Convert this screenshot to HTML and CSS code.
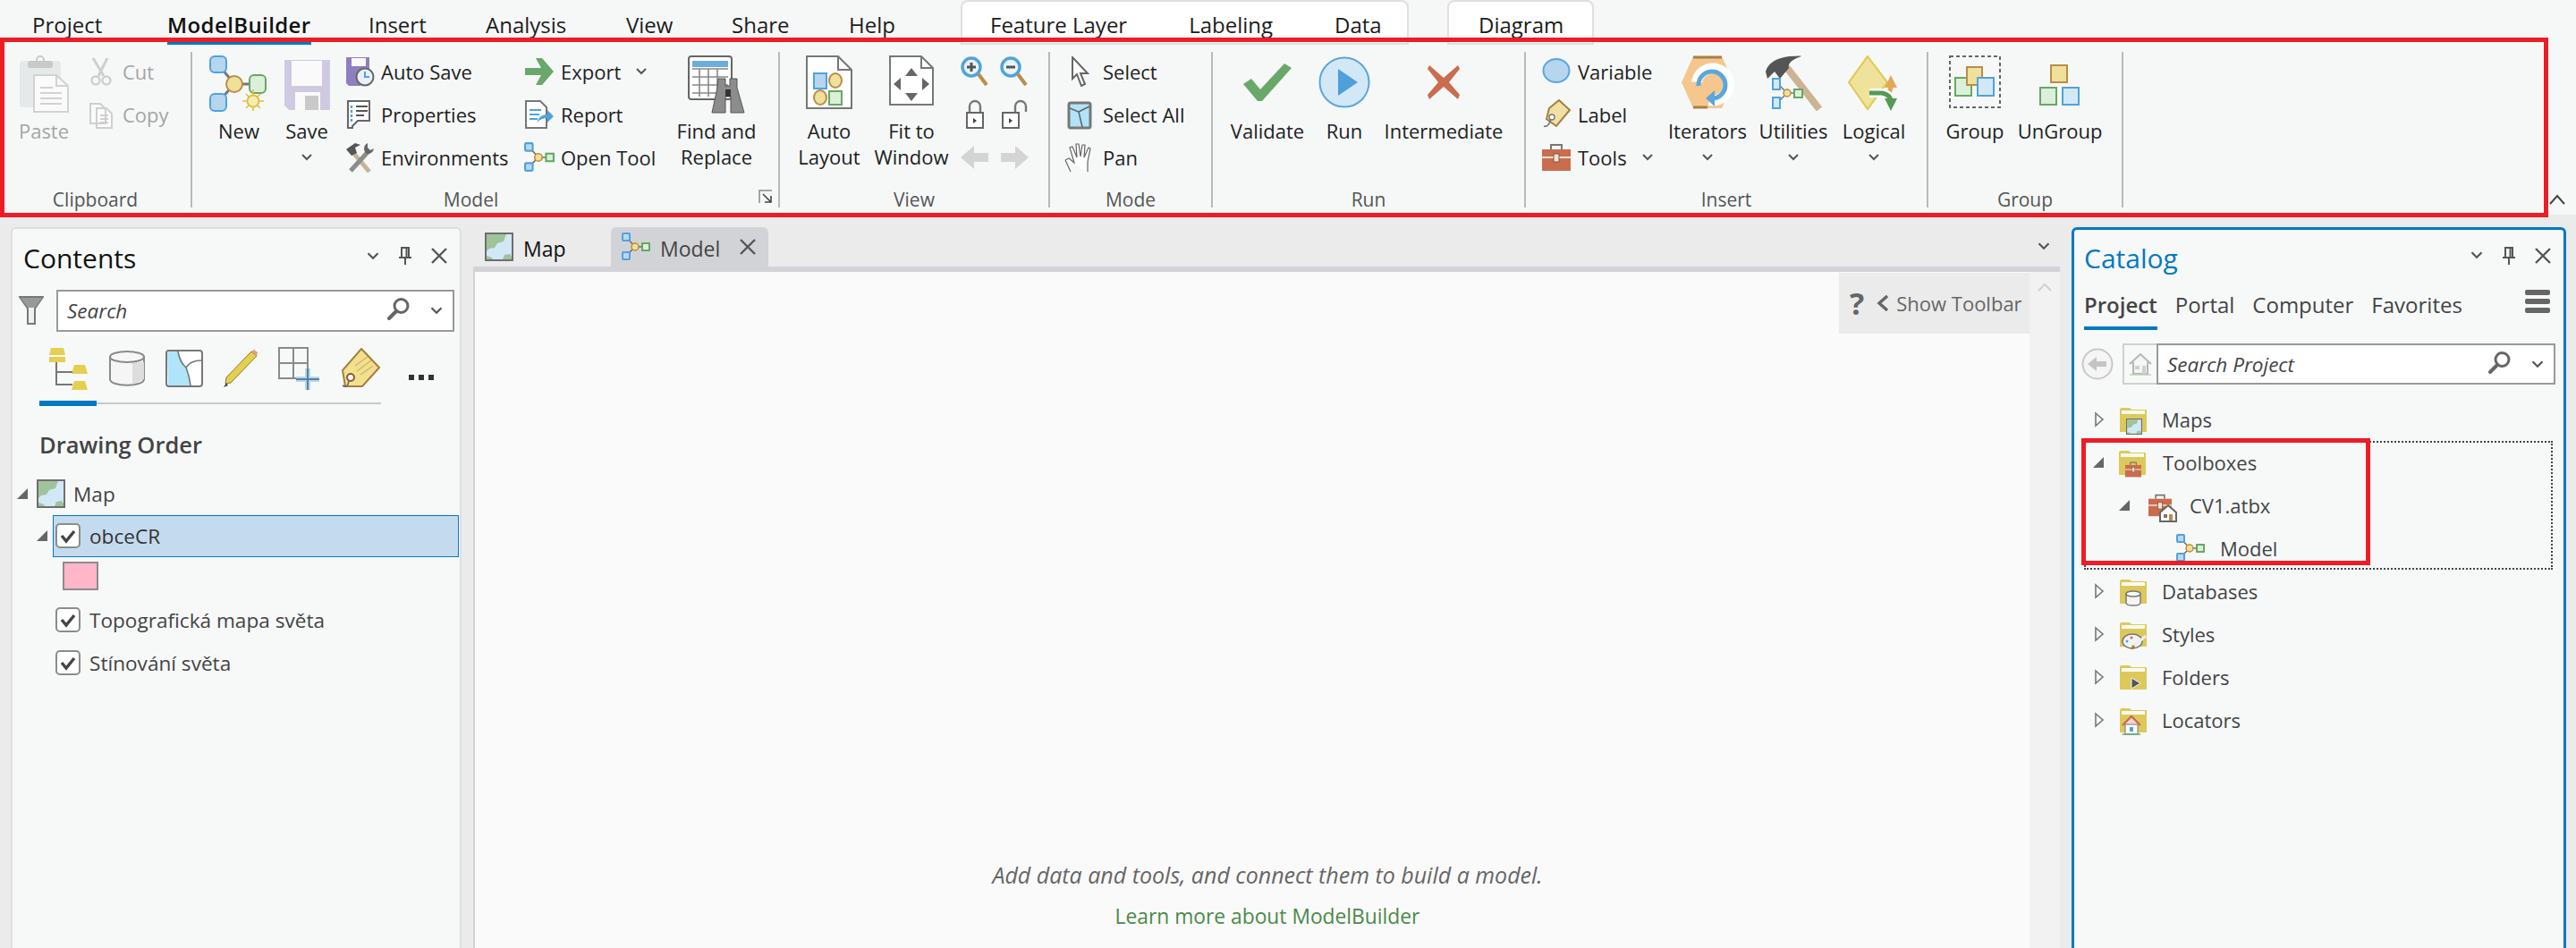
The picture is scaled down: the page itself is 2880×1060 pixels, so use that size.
FILE: index.html
```html
<!DOCTYPE html>
<html lang="en">
<head>
<meta charset="utf-8">
<title>ModelBuilder</title>
<link rel="stylesheet" href="styles.css">
</head>
<body>
<svg class="defs" aria-hidden="true">
  <symbol id="i-model" viewBox="0 0 32 32">
    <path d="M6 6 15 16 6 25M15 16H25" fill="none" stroke="#7a6a50" stroke-width="1.5"/>
    <rect x="1" y="1" width="8" height="8" rx="1" fill="#b8d8f0" stroke="#4fa3dc" stroke-width="2"/>
    <rect x="1" y="22" width="8" height="8" rx="1" fill="#b8d8f0" stroke="#4fa3dc" stroke-width="2"/>
    <circle cx="15" cy="16" r="4" fill="#f0e090" stroke="#b98d4a" stroke-width="1.5"/>
    <rect x="23" y="12" width="8" height="8" fill="#dcefd8" stroke="#66a866" stroke-width="2"/>
  </symbol>
  <symbol id="i-map" viewBox="0 0 32 32">
    <rect x="1" y="1" width="30" height="30" fill="#d3e8f6" stroke="#6e6e6e" stroke-width="2"/>
    <path d="M2 2H24L21 10 14 12 11 17 5 18 2 21ZM20 30 22 25 28 24 30 27V30Z M2 26 8 28 9 30H2Z" fill="#a0c49a"/>
  </symbol>
  <symbol id="i-chev" viewBox="0 0 14 10">
    <path d="M2 2 7 7 12 2" fill="none" stroke="#555" stroke-width="2"/>
  </symbol>
  <symbol id="i-x" viewBox="0 0 20 20">
    <path d="M2 2 18 18M18 2 2 18" stroke="#555" stroke-width="2.4" fill="none"/>
  </symbol>
  <symbol id="i-pin" viewBox="0 0 16 22">
    <path d="M4 2H12V13H4ZM1 13H15M8 13V21M9.5 3V12" fill="none" stroke="#555" stroke-width="2"/>
  </symbol>
  <symbol id="i-find" viewBox="0 0 26 26">
    <circle cx="15.5" cy="10" r="7.5" fill="none" stroke="#666" stroke-width="3"/>
    <path d="M10 16 2 24" stroke="#666" stroke-width="4" stroke-linecap="round"/>
  </symbol>
  <symbol id="i-open" viewBox="0 0 12 18">
    <path d="M2 2 10 9 2 16Z" fill="#f7f9f9" stroke="#777" stroke-width="1.6"/>
  </symbol>
  <symbol id="i-shut" viewBox="0 0 14 14">
    <path d="M13 1V13H1Z" fill="#666"/>
  </symbol>
  <symbol id="i-check" viewBox="0 0 28 28">
    <rect x="1" y="1" width="26" height="26" rx="4" fill="#fff" stroke="#8c8c8c" stroke-width="2"/>
    <path d="M7 14 12 20 21 9" fill="none" stroke="#444" stroke-width="3.4"/>
  </symbol>
  <symbol id="i-folder" viewBox="0 0 30 28">
    <path d="M0 3Q0 1 2 1H11L13 3H30V28H0Z" fill="#dcc95a"/>
    <path d="M2 4H28V8H2Z" fill="#fbfaf0"/>
  </symbol>
  <symbol id="i-toolbox" viewBox="0 0 34 32">
    <path d="M11 7V2H23V7" fill="none" stroke="#777" stroke-width="2"/>
    <rect x="1" y="7" width="32" height="24" fill="#c96d4e"/>
    <path d="M1 16H33" stroke="#f3e3da" stroke-width="2"/>
    <rect x="14" y="12" width="6" height="9" fill="#f3e3da" stroke="#8a5040"/>
  </symbol>
</svg>

<header class="top">
  <nav class="menu">
    <a class="m">Project</a>
    <a class="m m-builder">ModelBuilder</a>
    <a class="m">Insert</a>
    <a class="m">Analysis</a>
    <a class="m">View</a>
    <a class="m">Share</a>
    <a class="m">Help</a>
    <div class="ctx ctx-layer">
      <a class="m">Feature Layer</a>
      <a class="m">Labeling</a>
      <a class="m">Data</a>
    </div>
    <div class="ctx ctx-diagram"><a class="m">Diagram</a></div>
  </nav>

  <div class="ribbon">
    <section class="group g-clip">
      <div class="tools">
        <div class="lg off">
          <span class="lg-icon">
            <svg width="56" height="64" viewBox="0 0 56 64">
              <rect x="1" y="6" width="46" height="52" rx="4" fill="#e6e9e9"/>
              <rect x="10" y="6" width="28" height="8" rx="3" fill="#c9c9c9"/>
              <circle cx="24" cy="5" r="4" fill="none" stroke="#c9c9c9" stroke-width="2"/>
              <path d="M17 22H42L55 34V63H17Z" fill="#fafafa" stroke="#d2d2d2" stroke-width="2"/>
              <path d="M42 22V34H55M24 36H38M24 42H48M24 48H48M24 54H48" fill="none" stroke="#d2d2d2" stroke-width="2"/>
            </svg>
          </span>
          <span>Paste</span>
        </div>
        <div class="col">
          <div class="sm off">
            <svg width="34" height="34" viewBox="0 0 34 34">
              <path d="M8 2 20 22M24 2 14 22" stroke="#cfcfcf" stroke-width="3" fill="none"/>
              <circle cx="11" cy="27" r="4.5" fill="none" stroke="#cfcfcf" stroke-width="2.5"/>
              <circle cx="23" cy="27" r="4.5" fill="none" stroke="#cfcfcf" stroke-width="2.5"/>
            </svg>
            <span>Cut</span>
          </div>
          <div class="sm off">
            <svg width="34" height="34" viewBox="0 0 34 34">
              <path d="M5 5H16L22 11V27H5ZM12 10H23L29 16V32H12Z" fill="#fafafa" stroke="#cfcfcf" stroke-width="2"/>
              <path d="M16 18H25M16 22H25M16 26H25" stroke="#cfcfcf" stroke-width="2"/>
            </svg>
            <span>Copy</span>
          </div>
        </div>
      </div>
      <div class="glabel">Clipboard</div>
    </section>

    <section class="group g-model">
      <div class="tools">
        <div class="lg">
          <span class="lg-icon">
            <svg width="66" height="64" viewBox="0 0 66 64">
              <path d="M10 10 28 32 10 52M28 32H50" stroke="#777" stroke-width="3" fill="none"/>
              <rect x="1" y="1" width="18" height="18" rx="5" fill="#b5d6ee" stroke="#4fa3dc" stroke-width="2"/>
              <rect x="1" y="43" width="18" height="19" rx="5" fill="#b5d6ee" stroke="#4fa3dc" stroke-width="2"/>
              <rect x="45" y="22" width="18" height="20" rx="5" fill="#dcefd8" stroke="#66a866" stroke-width="2"/>
              <circle cx="28" cy="32" r="9" fill="#efe09a" stroke="#b98d4a" stroke-width="2"/>
              <path d="M49 38V62M37 51H61M41 43 57 59M57 43 41 59" stroke="#e0c040" stroke-width="1.6"/>
              <circle cx="49" cy="51" r="6.5" fill="#f6edb0" stroke="#e0c040" stroke-width="2"/>
            </svg>
          </span>
          <span>New</span>
        </div>
        <div class="lg">
          <span class="lg-icon">
            <svg width="52" height="58" viewBox="0 0 52 58" class="dn4">
              <path d="M1 1H52V57H6L1 52Z" fill="#cfc9e2"/>
              <rect x="9" y="2" width="34" height="28" fill="#fafafa"/>
              <rect x="13" y="37" width="28" height="20" fill="#fafafa"/>
              <rect x="24" y="41" width="15" height="16" fill="#c9c9c9"/>
            </svg>
          </span>
          <span>Save</span>
          <svg class="chev" width="14" height="10"><use href="#i-chev"/></svg>
        </div>
        <div class="col">
          <div class="sm">
            <svg width="34" height="34" viewBox="0 0 34 34">
              <path d="M2 1H28V24H2Z" fill="#8f7fbf"/>
              <rect x="8" y="2" width="16" height="9" fill="#fafafa"/>
              <path d="M2 24V30L5 33H18V24Z" fill="#8f7fbf"/>
              <circle cx="23" cy="23" r="9.5" fill="#e9f1f7" stroke="#666" stroke-width="2"/>
              <path d="M23 17V23H28" fill="none" stroke="#4fa3dc" stroke-width="2"/>
            </svg>
            <span>Auto Save</span>
          </div>
          <div class="sm">
            <svg width="34" height="34" viewBox="0 0 34 34">
              <path d="M4 2H28V24H15L9 30V32H4Z" fill="#fff" stroke="#666" stroke-width="2"/>
              <path d="M13 8H26M13 13H26M13 18H22" stroke="#555" stroke-width="2"/>
              <path d="M8 7V10M8 12V15M8 17V20M8 22V25" stroke="#4fa3dc" stroke-width="2.4"/>
            </svg>
            <span>Properties</span>
          </div>
          <div class="sm">
            <svg width="34" height="34" viewBox="0 0 34 34">
              <path d="M5 6 28 33" stroke="#c4b59a" stroke-width="5"/>
              <path d="M28 9 7 32" stroke="#8c8c8c" stroke-width="5"/>
              <path d="M2 8 12 1 18 3 12 6 14 12 8 15Z" fill="#555"/>
              <path d="M26 1A7 7 0 0 0 25 13 7 7 0 0 0 33 7L29 9 26 6Z" fill="#666"/>
            </svg>
            <span>Environments</span>
          </div>
        </div>
        <div class="col">
          <div class="sm">
            <svg width="34" height="34" viewBox="0 0 34 34">
              <path d="M1 13H19L13 2H20L33 17 20 32H13L19 21H1Z" fill="#69a869"/>
            </svg>
            <span>Export</span>
            <svg class="chev-in" width="14" height="10"><use href="#i-chev"/></svg>
          </div>
          <div class="sm">
            <svg width="34" height="34" viewBox="0 0 34 34">
              <path d="M2 2H18L25 9V32H2Z" fill="#fff" stroke="#777" stroke-width="2"/>
              <path d="M6 12H19M6 17H17M6 22H15" stroke="#4fa3dc" stroke-width="2"/>
              <path d="M14 26Q17 17 26 17V12L33 19 26 26V21Q19 21 14 26Z" fill="#4fa3dc"/>
            </svg>
            <span>Report</span>
          </div>
          <div class="sm">
            <svg width="34" height="34"><use href="#i-model"/></svg>
            <span>Open Tool</span>
          </div>
        </div>
        <div class="lg">
          <span class="lg-icon">
            <svg width="64" height="66" viewBox="0 0 64 66">
              <rect x="1" y="1" width="48" height="48" rx="3" fill="#fff" stroke="#666" stroke-width="2"/>
              <rect x="5" y="6" width="40" height="7" fill="#6aaede"/>
              <path d="M5 15H45M5 24H45M5 33H45M5 42H45M13 15V46M23 15V46M33 15V46" stroke="#888" stroke-width="1.6"/>
              <path d="M34 26H42V34H47V26H55V36L63 64H48V46H42V64H27L33 36Z" fill="#8c8c8c" stroke="#555"/>
              <path d="M42 38H48V46H42Z" fill="#333"/>
            </svg>
          </span>
          <span class="two">Find and<br>Replace</span>
        </div>
      </div>
      <div class="glabel">Model</div>
      <svg class="launcher" width="16" height="16" viewBox="0 0 16 16">
        <path d="M1 15V1H15" fill="none" stroke="#888" stroke-width="1.5"/>
        <path d="M5 5 14 14M14 7V14H7" fill="none" stroke="#444" stroke-width="1.6"/>
      </svg>
    </section>

    <section class="group g-view">
      <div class="tools">
        <div class="lg">
          <span class="lg-icon">
            <svg width="52" height="60" viewBox="0 0 52 60">
              <path d="M1 1H36L51 16V59H1Z" fill="#fff" stroke="#777" stroke-width="2"/>
              <path d="M36 1V16H51" fill="none" stroke="#777" stroke-width="2"/>
              <rect x="9" y="20" width="14" height="17" fill="#b5d6ee" stroke="#4fa3dc" stroke-width="2"/>
              <ellipse cx="33" cy="28" rx="7" ry="8" fill="#efe09a" stroke="#b98d4a" stroke-width="2"/>
              <ellipse cx="16" cy="47" rx="7" ry="8" fill="#efe09a" stroke="#b98d4a" stroke-width="2"/>
              <rect x="26" y="40" width="14" height="15" fill="#dcefd8" stroke="#66a866" stroke-width="2"/>
            </svg>
          </span>
          <span class="two">Auto<br>Layout</span>
        </div>
        <div class="lg">
          <span class="lg-icon">
            <svg width="50" height="56" viewBox="0 0 50 56">
              <path d="M1 1H36L49 14V55H1Z" fill="#fff" stroke="#777" stroke-width="2"/>
              <path d="M36 1V14H49" fill="none" stroke="#777" stroke-width="2"/>
              <path d="M25 14 32 23H18ZM25 51 18 42H32ZM5 32 13 25V39ZM45 32 37 25V39Z" fill="#666"/>
            </svg>
          </span>
          <span class="two">Fit to<br>Window</span>
        </div>
        <div class="nav-grid">
          <svg width="34" height="34" viewBox="0 0 34 34">
            <circle cx="13" cy="12" r="10" fill="#e9f3fa" stroke="#4fa3dc" stroke-width="3.4"/>
            <path d="M13 7V17M8 12H18" stroke="#555" stroke-width="3"/>
            <path d="M21 20 30 32" stroke="#b98d4a" stroke-width="4"/>
          </svg>
          <svg width="34" height="34" viewBox="0 0 34 34">
            <circle cx="13" cy="12" r="10" fill="#e9f3fa" stroke="#4fa3dc" stroke-width="3.4"/>
            <path d="M8 12H18" stroke="#555" stroke-width="3"/>
            <path d="M21 20 30 32" stroke="#b98d4a" stroke-width="4"/>
          </svg>
          <svg width="34" height="34" viewBox="0 0 34 34">
            <path d="M11 15V8A6 6 0 0 1 23 8V15" fill="none" stroke="#777" stroke-width="2.4"/>
            <rect x="8" y="15" width="18" height="17" fill="#fff" stroke="#666" stroke-width="2"/>
            <path d="M15 21 19 24 15 27Z" fill="#444"/>
          </svg>
          <svg width="34" height="34" viewBox="0 0 34 34">
            <path d="M18 15V8A6 6 0 0 1 30 8V14" fill="none" stroke="#777" stroke-width="2.4"/>
            <rect x="4" y="15" width="18" height="17" fill="#fff" stroke="#666" stroke-width="2"/>
            <path d="M11 21 15 24 11 27Z" fill="#444"/>
          </svg>
          <svg width="34" height="34" viewBox="0 0 34 34">
            <path d="M1 17 16 4V12H32V22H16V30Z" fill="#d4d4d4"/>
          </svg>
          <svg width="34" height="34" viewBox="0 0 34 34">
            <path d="M33 17 18 4V12H2V22H18V30Z" fill="#d4d4d4"/>
          </svg>
        </div>
      </div>
      <div class="glabel">View</div>
    </section>

    <section class="group g-mode">
      <div class="tools">
        <div class="col">
          <div class="sm sm-wide">
            <svg width="34" height="34" viewBox="0 0 34 34">
              <path d="M9 1V25L14 20 19 33 23 31 18 19H26Z" fill="#fff" stroke="#666" stroke-width="2"/>
            </svg>
            <span>Select</span>
          </div>
          <div class="sm sm-wide">
            <svg width="34" height="34" viewBox="0 0 34 34">
              <rect x="5" y="4" width="24" height="28" rx="2" fill="#b0e4f8" stroke="#777" stroke-width="3"/>
              <path d="M6 10 16 14 20 31M16 14 28 8" fill="none" stroke="#666" stroke-width="1.6"/>
            </svg>
            <span>Select All</span>
          </div>
          <div class="sm sm-wide">
            <svg width="34" height="34" viewBox="0 0 34 34">
              <path d="M1 20 5 18 11 23 6 6 9 5 14 17 13 2H16L18 16 20 3H23L22 17 27 6 29 7 26 22V33M7 33 1 20" fill="#fff" stroke="#666" stroke-width="1.2"/>
            </svg>
            <span>Pan</span>
          </div>
        </div>
      </div>
      <div class="glabel">Mode</div>
    </section>

    <section class="group g-run">
      <div class="tools">
        <div class="lg">
          <span class="lg-icon">
            <svg width="56" height="44" viewBox="0 0 56 44">
              <path d="M1 24 10 18 20 30 47 1 55 6 22 43H17Z" fill="#69a869"/>
            </svg>
          </span>
          <span>Validate</span>
        </div>
        <div class="lg">
          <span class="lg-icon">
            <svg width="58" height="58" viewBox="0 0 58 58">
              <circle cx="29" cy="29" r="27.5" fill="#d3e8f6" stroke="#5ba6dc" stroke-width="2"/>
              <path d="M22 14 44 29 22 44Z" fill="#4f9fdb"/>
            </svg>
          </span>
          <span>Run</span>
        </div>
        <div class="lg">
          <span class="lg-icon">
            <svg width="38" height="38" viewBox="0 0 38 38">
              <path d="M3 0 19 14 35 0 37 4 25 19 37 33 35 38 19 24 3 38 1 33 13 19 1 4Z" fill="#c96d4e"/>
            </svg>
          </span>
          <span>Intermediate</span>
        </div>
      </div>
      <div class="glabel">Run</div>
    </section>

    <section class="group g-insert">
      <div class="tools">
        <div class="col">
          <div class="sm">
            <svg width="34" height="34" viewBox="0 0 34 34">
              <ellipse cx="17" cy="16" rx="14.5" ry="13" fill="#b5d6ee" stroke="#5ba6dc" stroke-width="2"/>
            </svg>
            <span>Variable</span>
          </div>
          <div class="sm">
            <svg width="34" height="34" viewBox="0 0 34 34">
              <path d="M20 1 32 12 17 30 6 22 9 10Z" fill="#f2dfa4" stroke="#a5803e" stroke-width="2"/>
              <circle cx="12" cy="20" r="3" fill="#fff" stroke="#777" stroke-width="1.4"/>
              <path d="M11 22Q8 32 3 30" fill="none" stroke="#777" stroke-width="1.6"/>
            </svg>
            <span>Label</span>
          </div>
          <div class="sm">
            <svg width="34" height="34"><use href="#i-toolbox"/></svg>
            <span>Tools</span>
            <svg class="chev-in" width="14" height="10"><use href="#i-chev"/></svg>
          </div>
        </div>
        <div class="lg">
          <span class="lg-icon">
            <svg width="60" height="60" viewBox="0 0 60 60">
              <path d="M14 1H46L59 30 46 59H14L1 30Z" fill="#f6c68f"/>
              <path d="M14 2H46M14 58H30" stroke="#a87f45" stroke-width="3"/>
              <path d="M18 30A18 18 0 1 1 32 50" fill="none" stroke="#fff" stroke-width="12"/>
              <path d="M20 34A15 15 0 1 1 34 48" fill="none" stroke="#5ba6dc" stroke-width="5"/>
              <path d="M38 39 28 48 38 57Z" fill="#5ba6dc"/>
            </svg>
          </span>
          <span>Iterators</span>
          <svg class="chev" width="14" height="10"><use href="#i-chev"/></svg>
        </div>
        <div class="lg">
          <span class="lg-icon">
            <svg width="66" height="62" viewBox="0 0 66 62">
              <path d="M26 14 62 60" stroke="#cdb392" stroke-width="8"/>
              <path d="M2 18Q6 4 28 1 44 0 42 1 26 6 28 14L18 26 12 18 4 26Z" fill="#555"/>
              <path d="M14 30 26 42 14 54M26 42H38" fill="none" stroke="#777" stroke-width="1.5"/>
              <rect x="10" y="26" width="8" height="12" fill="#d3e8f6" stroke="#4fa3dc" stroke-width="2"/>
              <rect x="10" y="47" width="8" height="12" fill="#d3e8f6" stroke="#4fa3dc" stroke-width="2"/>
              <circle cx="26" cy="42" r="4" fill="#efe09a" stroke="#b98d4a" stroke-width="1.5"/>
              <rect x="34" y="38" width="9" height="9" fill="#dcefd8" stroke="#66a866" stroke-width="2"/>
            </svg>
          </span>
          <span>Utilities</span>
          <svg class="chev" width="14" height="10"><use href="#i-chev"/></svg>
        </div>
        <div class="lg">
          <span class="lg-icon">
            <svg width="58" height="62" viewBox="0 0 58 62">
              <path d="M22 1 44 30 22 60 1 30Z" fill="#efe29a" stroke="#e0c84f" stroke-width="2"/>
              <path d="M48 34Q48 44 38 44" fill="none" stroke="#e5a65b" stroke-width="5"/>
              <path d="M48 22 55 36H41Z" fill="#e5a65b"/>
              <path d="M24 42H38Q48 44 48 54" fill="none" stroke="#fff" stroke-width="10"/>
              <path d="M24 42H38Q48 44 48 52" fill="none" stroke="#559a55" stroke-width="5"/>
              <path d="M41 48H55L48 62Z" fill="#559a55"/>
            </svg>
          </span>
          <span>Logical</span>
          <svg class="chev" width="14" height="10"><use href="#i-chev"/></svg>
        </div>
      </div>
      <div class="glabel">Insert</div>
    </section>

    <section class="group g-group">
      <div class="tools">
        <div class="lg">
          <span class="lg-icon">
            <svg width="58" height="60" viewBox="0 0 58 60">
              <rect x="1" y="1" width="56" height="57" fill="none" stroke="#666" stroke-width="2" stroke-dasharray="4 3"/>
              <rect x="7" y="25" width="18" height="20" fill="#dcefd8" stroke="#66a866" stroke-width="2"/>
              <rect x="20" y="13" width="17" height="20" fill="#efe09a" stroke="#b98d4a" stroke-width="2"/>
              <rect x="32" y="25" width="18" height="20" fill="#d3e8f6" stroke="#4fa3dc" stroke-width="2"/>
            </svg>
          </span>
          <span>Group</span>
        </div>
        <div class="lg">
          <span class="lg-icon lg-icon-low">
            <svg width="46" height="46" viewBox="0 0 46 46">
              <rect x="13" y="1" width="18" height="19" fill="#efe09a" stroke="#b98d4a" stroke-width="2"/>
              <rect x="1" y="26" width="18" height="19" fill="#dcefd8" stroke="#66a866" stroke-width="2"/>
              <rect x="26" y="26" width="18" height="19" fill="#d3e8f6" stroke="#4fa3dc" stroke-width="2"/>
            </svg>
          </span>
          <span>UnGroup</span>
        </div>
      </div>
      <div class="glabel">Group</div>
    </section>

    <svg class="collapse" width="20" height="14" viewBox="0 0 20 14">
      <path d="M2 12 10 3 18 12" fill="none" stroke="#444" stroke-width="2"/>
    </svg>
  </div>
  <div class="red-frame"></div>
</header>

<main class="main">
  <aside class="pane contents">
    <div class="pane-head">
      <h2 class="pane-title">Contents</h2>
      <div class="pane-tools">
        <svg width="16" height="11"><use href="#i-chev"/></svg>
        <svg width="16" height="22"><use href="#i-pin"/></svg>
        <svg width="20" height="20"><use href="#i-x"/></svg>
      </div>
    </div>
    <div class="filter-row">
      <svg width="28" height="34" viewBox="0 0 28 34">
        <path d="M1 2H27L18 15V32H10V15Z" fill="#f0f0f0" stroke="#777" stroke-width="2"/>
        <path d="M2 3H26L18 14H10Z" fill="#999"/>
      </svg>
      <div class="search">
        <span class="search-text">Search</span>
        <svg class="s-find" width="26" height="26"><use href="#i-find"/></svg>
        <svg class="s-chev" width="16" height="11"><use href="#i-chev"/></svg>
      </div>
    </div>
    <div class="view-tabs">
      <svg width="46" height="48" viewBox="0 0 46 48">
        <path d="M4 1H18L20 9H2ZM2 11H20V17H2ZM30 20H42L45 30H27ZM30 38H42L45 48H27Z" fill="#e5cf50"/>
        <path d="M10 17V42H28M10 28H28" fill="none" stroke="#777" stroke-width="2"/>
      </svg>
      <svg width="42" height="42" viewBox="0 0 42 42">
        <path d="M2 8V33C2 42 40 42 40 33V8Z" fill="#f5f5f5" stroke="#8a8a8a" stroke-width="2"/>
        <path d="M27 14V39L40 33V14Z" fill="#ddd"/>
        <ellipse cx="21" cy="8" rx="19" ry="6" fill="#f7f7f7" stroke="#8a8a8a" stroke-width="2"/>
      </svg>
      <svg width="42" height="42" viewBox="0 0 42 42">
        <rect x="1" y="1" width="40" height="40" rx="3" fill="#fff" stroke="#777" stroke-width="2"/>
        <path d="M2 2H14Q16 14 23 20 27 30 28 40H3Z" fill="#b0e4f8"/>
        <path d="M14 2Q16 14 23 20 27 30 28 40M23 20Q28 12 40 12" fill="none" stroke="#777" stroke-width="1.6"/>
      </svg>
      <svg width="40" height="44" viewBox="0 0 40 44">
        <path d="M32 3 38 8 9 38 3 39 4 32Z" fill="#e5cf50" stroke="#8a7a30"/>
        <path d="M32 3 35 1 39 4 38 8Z" fill="#e79a86"/>
        <path d="M4 38 1 43 6 41Z" fill="#444"/>
      </svg>
      <svg width="48" height="48" viewBox="0 0 48 48">
        <path d="M1 1H33V35H1ZM17 1V35M1 18H33" fill="none" stroke="#8a8a8a" stroke-width="2"/>
        <path d="M33 24V48M20 36H46" stroke="#b5d6ee" stroke-width="6"/>
        <path d="M33 24V48M20 36H46" stroke="#5c7f9a" stroke-width="2"/>
      </svg>
      <svg width="44" height="46" viewBox="0 0 44 46">
        <path d="M23 1 43 22 24 43H5L2 25Z" fill="#f2e08e" stroke="#a5803e" stroke-width="2"/>
        <path d="M16 20 30 10M18 26 34 14M22 30 36 20" stroke="#cbb867" stroke-width="1.4"/>
        <circle cx="11" cy="33" r="4" fill="#fff" stroke="#8a5d30" stroke-width="2"/>
        <path d="M9 36Q8 46 2 42" fill="none" stroke="#666" stroke-width="1.6"/>
      </svg>
      <span class="dots"><i></i><i></i><i></i></span>
    </div>
    <div class="rule"><span class="rule-on"></span></div>
    <h3 class="order">Drawing Order</h3>
    <ul class="layers">
      <li class="lay lay-map">
        <svg class="tw" width="14" height="14"><use href="#i-shut"/></svg>
        <svg width="32" height="32"><use href="#i-map"/></svg>
        <span>Map</span>
      </li>
      <li class="lay lay-sel">
        <svg class="tw" width="14" height="14"><use href="#i-shut"/></svg>
        <div class="sel">
          <svg width="28" height="28"><use href="#i-check"/></svg>
          <span>obceCR</span>
        </div>
      </li>
      <li class="swatch-row"><span class="swatch"></span></li>
      <li class="lay lay-sub">
        <svg width="28" height="28"><use href="#i-check"/></svg>
        <span>Topografická mapa světa</span>
      </li>
      <li class="lay lay-sub">
        <svg width="28" height="28"><use href="#i-check"/></svg>
        <span>Stínování světa</span>
      </li>
    </ul>
  </aside>

  <section class="center">
    <div class="doc-tabs">
      <div class="doc doc-map">
        <svg width="32" height="32"><use href="#i-map"/></svg>
        <span>Map</span>
      </div>
      <div class="doc doc-model">
        <svg width="32" height="32"><use href="#i-model"/></svg>
        <span>Model</span>
        <svg class="doc-x" width="20" height="20"><use href="#i-x"/></svg>
      </div>
      <svg class="doc-more" width="16" height="11"><use href="#i-chev"/></svg>
    </div>
    <div class="canvas">
      <div class="canvas-view">
        <div class="show-bar">
          <span class="q">?</span>
          <svg width="14" height="18" viewBox="0 0 14 18"><path d="M12 1 3 9 12 17" fill="none" stroke="#666" stroke-width="3.4"/></svg>
          <span>Show Toolbar</span>
        </div>
        <div class="hint">
          <p class="hint-main">Add data and tools, and connect them to build a model.</p>
          <a class="hint-link">Learn more about ModelBuilder</a>
        </div>
      </div>
      <div class="scroll">
        <svg width="16" height="10" viewBox="0 0 16 10"><path d="M1 9 8 2 15 9" fill="none" stroke="#d0d0d0" stroke-width="2"/></svg>
      </div>
    </div>
  </section>

  <aside class="pane catalog">
    <div class="pane-head cat-head">
      <h2 class="pane-title cat-title">Catalog</h2>
      <div class="pane-tools">
        <svg width="16" height="11"><use href="#i-chev"/></svg>
        <svg width="16" height="22"><use href="#i-pin"/></svg>
        <svg width="20" height="20"><use href="#i-x"/></svg>
      </div>
    </div>
    <div class="cat-tabs">
      <a class="ct ct-on">Project</a>
      <a class="ct">Portal</a>
      <a class="ct">Computer</a>
      <a class="ct">Favorites</a>
      <span class="burger"><i></i><i></i><i></i></span>
    </div>
    <div class="cat-search">
      <svg width="36" height="36" viewBox="0 0 36 36">
        <circle cx="18" cy="18" r="16.5" fill="#f5f5f5" stroke="#c8c8c8" stroke-width="2"/>
        <path d="M7 18 17 10V15H28V21H17V26Z" fill="#c4c4c4"/>
      </svg>
      <div class="home">
        <svg width="26" height="26" viewBox="0 0 26 26">
          <path d="M1 13 13 2 25 13M5 11V24H21V11" fill="#f5f5f5" stroke="#b5b5b5" stroke-width="2"/>
          <path d="M15 15H19V24H15ZM7 15H12V19H7Z" fill="#cfcfcf"/>
          <path d="M1 25H25" stroke="#b9d6b9" stroke-width="1.5"/>
        </svg>
      </div>
      <div class="search cat-box">
        <span class="search-text">Search Project</span>
        <svg class="s-find" width="26" height="26"><use href="#i-find"/></svg>
        <svg class="s-chev" width="16" height="11"><use href="#i-chev"/></svg>
      </div>
    </div>
    <ul class="tree">
      <li class="node">
        <svg width="12" height="18"><use href="#i-open"/></svg>
        <span class="fold">
          <svg width="30" height="28"><use href="#i-folder"/></svg>
          <svg class="badge" width="20" height="18" viewBox="0 0 20 18"><use href="#i-map"/></svg>
        </span>
        <span>Maps</span>
      </li>
      <li class="branch">
        <div class="node">
          <svg width="14" height="14"><use href="#i-shut"/></svg>
          <span class="fold">
            <svg width="30" height="28"><use href="#i-folder"/></svg>
            <svg class="badge" width="20" height="18" viewBox="0 0 34 32"><use href="#i-toolbox"/></svg>
          </span>
          <span>Toolboxes</span>
        </div>
        <div class="node node-2">
          <svg width="14" height="14"><use href="#i-shut"/></svg>
          <span class="fold">
            <svg width="34" height="26" viewBox="0 0 34 32"><use href="#i-toolbox"/></svg>
            <svg class="badge badge-home" width="20" height="20" viewBox="0 0 20 20">
              <path d="M1 9 10 1 19 9V19H1Z" fill="#fff" stroke="#666" stroke-width="2"/>
              <path d="M11 11H15V18H11Z" fill="#b98d4a"/>
              <path d="M5 11H9V15H5Z" fill="#777"/>
            </svg>
          </span>
          <span>CV1.atbx</span>
        </div>
        <div class="node node-3">
          <svg width="32" height="32"><use href="#i-model"/></svg>
          <span>Model</span>
        </div>
        <div class="red-box"></div>
      </li>
      <li class="node">
        <svg width="12" height="18"><use href="#i-open"/></svg>
        <span class="fold">
          <svg width="30" height="28"><use href="#i-folder"/></svg>
          <svg class="badge" width="18" height="18" viewBox="0 0 18 18">
            <path d="M1 4V14C1 18 17 18 17 14V4Z" fill="#f5f5f5" stroke="#777" stroke-width="1.4"/>
            <ellipse cx="9" cy="4" rx="8" ry="3" fill="#fafafa" stroke="#777" stroke-width="1.4"/>
          </svg>
        </span>
        <span>Databases</span>
      </li>
      <li class="node">
        <svg width="12" height="18"><use href="#i-open"/></svg>
        <span class="fold">
          <svg width="30" height="28"><use href="#i-folder"/></svg>
          <svg class="badge badge-wide" width="28" height="18" viewBox="0 0 28 18">
            <ellipse cx="12" cy="9" rx="11" ry="8" fill="#f2f2f2" stroke="#777" stroke-width="1.4"/>
            <path d="M27 3 14 14" stroke="#eee" stroke-width="3"/>
            <path d="M14 14 11 18" stroke="#a5803e" stroke-width="3"/>
            <circle cx="6" cy="9" r="1.5" fill="#4fa3dc"/>
            <circle cx="11" cy="5" r="1.5" fill="#c96d4e"/>
          </svg>
        </span>
        <span>Styles</span>
      </li>
      <li class="node">
        <svg width="12" height="18"><use href="#i-open"/></svg>
        <span class="fold">
          <svg width="30" height="28"><use href="#i-folder"/></svg>
          <svg class="badge badge-play" width="12" height="14" viewBox="0 0 12 14"><path d="M1 1 11 7 1 13Z" fill="#555" stroke="#f7f9f9"/></svg>
        </span>
        <span>Folders</span>
      </li>
      <li class="node">
        <svg width="12" height="18"><use href="#i-open"/></svg>
        <span class="fold">
          <svg width="30" height="28"><use href="#i-folder"/></svg>
          <svg class="badge badge-wide" width="22" height="22" viewBox="0 0 22 22">
            <path d="M1 11 11 1 21 11" fill="#f2d8d0" stroke="#c96d4e" stroke-width="2.4"/>
            <path d="M4 10H18V21H4Z" fill="#fff" stroke="#777"/>
            <path d="M9 13H13V18H9Z" fill="#4fa3dc"/>
            <path d="M1 21H21" stroke="#66a866" stroke-width="1.6"/>
          </svg>
        </span>
        <span>Locators</span>
      </li>
    </ul>
  </aside>
</main>
</body>
</html>
```

FILE: styles.css
```css
* { box-sizing: border-box; }
html, body { margin: 0; height: 100%; }
body {
  width: 2880px; height: 1060px; overflow: hidden;
  background: #ebebeb; color: #222;
  font-family: "Open Sans", "Noto Sans", sans-serif;
  font-size: 22px; display: flex; flex-direction: column;
}
h2, h3, p, ul { margin: 0; padding: 0; list-style: none; font-weight: 400; }
svg { display: block; flex: none; }
.defs { position: absolute; width: 0; height: 0; }

.top { position: relative; background: #f6f8f8; height: 240px; flex: none; }
.red-frame {
  position: absolute; left: 0; top: 42px; width: 2849px; height: 201px;
  border: 5px solid #ee1c25; pointer-events: none;
}
.menu {
  display: grid; grid-template-columns: 151px 225px 131px 157px 118px 131px 125px 544px 200px;
  height: 50px; padding-left: 36px; align-items: start; font-size: 24px; color: #1c1c1c;
}
.m { line-height: 56px; display: block; white-space: nowrap; }
.m-builder { font-weight: 600; height: 50px; border-bottom: 3px solid #0079c1; color: #111; letter-spacing: .4px; justify-self: start; }
.ctx {
  background: #fff; border: 2px solid #e0e0e0; border-top-left-radius: 8px; border-top-right-radius: 8px;
  height: 50px; display: flex; justify-self: start;
}
.ctx .m { margin-top: -2px; }
.ctx-layer { width: 501px; padding-left: 31px; gap: 69px; }
.ctx-diagram { width: 164px; padding-left: 33px; }

.ribbon { display: flex; height: 190px; padding-top: 8px; position: relative; }
.group { height: 174px; border-right: 2px solid #b9b9b9; display: flex; flex-direction: column; position: relative; flex: none; }
.tools { display: grid; flex: 1; align-items: start; min-height: 0; }
.glabel { text-align: center; line-height: 28px; height: 23px; color: #555; font-size: 21px; }
.g-clip { width: 215px; }
.g-clip .tools { grid-template-columns: 94px 1fr; padding-left: 2px; }
.g-model { width: 657px; }
.g-model .glabel { margin-right: 32px; }
.g-model .tools { grid-template-columns: 68px 84px 201px 169px 92px; padding-left: 18px; }
.g-view { width: 302px; }
.g-view .tools { grid-template-columns: 94px 90px 88px; padding-left: 8px; column-gap: 0; }
.g-mode { width: 182px; }
.g-mode .tools { padding-left: 16px; }
.g-run { width: 350px; }
.g-run .tools { grid-template-columns: 90px 82px 140px; padding-left: 16px; }
.g-insert { width: 450px; }
.g-insert .tools { grid-template-columns: 139px 94px 98px 82px; padding-left: 17px; }
.g-group { width: 218px; }
.g-group .tools { grid-template-columns: 80px 110px; padding-left: 12px; }

.lg { display: flex; flex-direction: column; align-items: center; text-align: center; line-height: 29px; white-space: nowrap; }
.lg-icon { height: 70px; margin-top: 4px; display: flex; align-items: flex-start; justify-content: center; }
.lg-icon-low { padding-top: 10px; }
.g-run .lg-icon { align-items: center; height: 60px; margin-bottom: 10px; }
.dn4 { margin-top: 4px; }
.chev { margin-top: 10px; }
.off, .off span { color: #a5a5a5; }
.col { display: flex; flex-direction: column; margin-top: -2px; }
.sm { display: flex; align-items: center; height: 48px; white-space: nowrap; gap: 7px; }
.sm-wide { gap: 9px; }
.chev-in { margin-left: 9px; }
.launcher { position: absolute; right: 6px; bottom: 4px; }
.nav-grid { display: grid; grid-template-columns: 44px 44px; grid-auto-rows: 48px; margin-left: 4px; align-items: center; justify-items: center; margin-top: -2px; }
.collapse { position: absolute; left: 2849px; top: 166px; }

.main { flex: 1; display: flex; padding-top: 14px; min-height: 0; }
.pane { background: #f7f9f9; flex: none; height: 830px; border-radius: 6px 6px 0 0; position: relative; }
.contents { width: 504px; margin-left: 12px; border: 2px solid #dedede; border-bottom: 0; }
.pane-head { display: flex; height: 62px; justify-content: space-between; align-items: center; padding: 4px 13px 0 12px; }
.pane-title { font-size: 30px; color: #111; line-height: 1; font-weight: 400; }
.pane-tools { display: flex; gap: 20px; align-items: center; margin-top: -6px; }
.filter-row { display: flex; align-items: center; gap: 14px; padding-left: 7px; height: 48px; margin-top: 5px; }
.search { width: 445px; height: 47px; background: #fff; border: 2px solid #999; display: flex; align-items: center; padding-left: 10px; }
.search-text { font-style: italic; color: #444; flex: 1; font-size: 22.5px; }
.s-find { margin-right: 21px; margin-top: -4px; }
.s-chev { margin-right: 10px; }
.view-tabs { display: flex; align-items: center; padding-left: 39px; margin-top: 17px; height: 48px; gap: 22px; }
.dots { display: flex; gap: 5px; margin: 20px 0 0 10px; }
.dots i { width: 6px; height: 6px; background: #333; display: block; }
.rule { margin: 14px 0 0 30px; width: 382px; height: 2px; background: #c9c9c9; position: relative; }
.rule-on { position: absolute; left: 0; top: -2px; width: 64px; height: 6px; background: #0079c1; }
.order { font-weight: 600; font-size: 25.5px; color: #444; margin: 28px 0 0 30px; line-height: 34px; }
.layers { margin-top: 20px; color: #444; font-size: 22.6px; }
.lay { display: flex; align-items: center; }
.lay-map { height: 36px; padding-left: 4px; gap: 9px; }
.tw { flex: none; }
.lay-sel { height: 48px; margin-top: 5px; padding-left: 26px; gap: 5px; }
.sel { width: 454px; height: 47px; background: #c4daee; border: 1px solid #0079c1; display: flex; align-items: center; gap: 10px; padding-left: 2px; color: #333; }
.swatch-row { height: 46px; padding: 5px 0 0 56px; }
.swatch { display: block; width: 40px; height: 32px; background: #ffb6c8; border: 2px solid #8c8c8c; }
.lay-sub { height: 48px; padding-left: 48px; gap: 10px; }

.center { width: 1774px; margin-left: 13px; flex: none; display: flex; flex-direction: column; font-size: 23px; }
.doc-tabs { display: flex; height: 44px; align-items: center; position: relative; }
.doc { display: flex; align-items: center; height: 44px; }
.doc span { margin-top: 3px; }
.doc-map { padding-left: 13px; gap: 11px; width: 154px; color: #111; }
.doc-model { width: 176px; padding-left: 12px; gap: 11px; background: #d2d3d7; border-radius: 6px 6px 0 0; color: #444; }
.doc-x { margin-left: 10px; }
.doc-more { margin-left: auto; margin-right: 10px; margin-top: -2px; }
.canvas { flex: 1; border-top: 6px solid #d2d3d7; border-left: 2px solid #d2d3d7; display: flex; background: #fafafa; }
.canvas-view { flex: 1; position: relative; display: flex; flex-direction: column; align-items: center; }
.show-bar {
  position: absolute; right: 0; top: 1px; width: 213px; height: 68px; background: #ebebeb;
  display: flex; align-items: center; padding-left: 12px; gap: 8px; color: #666; white-space: nowrap; font-size: 22px;
}
.q { font-weight: 700; font-size: 34px; margin-right: 6px; }
.hint { margin-top: 660px; margin-left: 34px; text-align: center; }
.hint-main { font-style: italic; color: #666; line-height: 28px; font-size: 25px; }
.hint-link { display: block; color: #4a8a48; margin-top: 18px; line-height: 30px; font-size: 22.8px; }
.scroll { width: 34px; background: #f2f2f2; display: flex; justify-content: center; padding-top: 12px; }

.catalog { width: 553px; margin-left: 13px; border: 3px solid #0079c1; border-bottom: 0; }
.cat-head { height: 63px; padding: 0 13px 0 11px; }
.cat-title { color: #0079c1; }
.cat-tabs { display: flex; gap: 20px; padding-left: 11px; height: 44px; margin-top: 4px; align-items: flex-start; color: #444; font-size: 24px; }
.ct { line-height: 34px; height: 45px; }
.ct-on { font-weight: 600; border-bottom: 4px solid #0079c1; }
.burger { margin-left: auto; margin-right: 15px; display: flex; flex-direction: column; gap: 4px; padding-top: 0; }
.burger i { display: block; width: 28px; height: 6px; background: #666; border-radius: 2px; }
.cat-search { display: flex; align-items: center; padding-left: 8px; margin-top: 16px; height: 46px; }
.home { width: 38px; height: 46px; margin-left: 10px; border: 2px solid #d0d0d0; border-right: 0; display: flex; align-items: center; justify-content: center; background: #f7f9f9; }
.cat-box { width: 446px; height: 46px; }
.tree { margin-top: 15px; color: #444; font-size: 22px; }
.node { display: flex; align-items: center; height: 48px; padding-left: 21px; }
.node > svg:first-child { width: 14px; margin-right: 16px; }
.fold { position: relative; display: block; margin-right: 17px; }
.badge { position: absolute; left: 6px; bottom: -3px; }
.badge-wide { left: 2px; }
.badge-play { left: 12px; bottom: 0; }
.badge-home { left: 16px; bottom: -6px; }
.branch { position: relative; outline: 2px dotted #444; outline-offset: -2px; margin: 0 12px 0 11px; }
.branch .node { padding-left: 9px; }
.branch .fold { margin-right: 19px; }
.branch .node-2 { padding-left: 38px; }
.branch .node-2 .fold { margin-right: 16px; }
.branch .node-3 { padding-left: 103px; }
.branch .node-3 > svg:first-child { width: 32px; margin-right: 17px; }
.red-box { position: absolute; left: -3px; top: -3px; width: 323px; height: 142px; border: 5px solid #ee1c25; }
```
